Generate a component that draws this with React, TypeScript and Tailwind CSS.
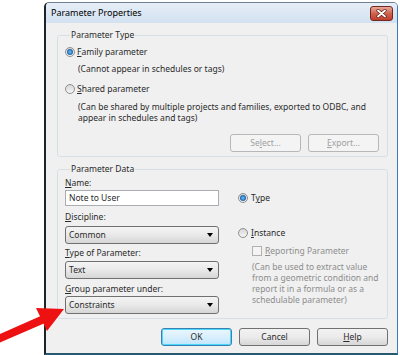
import React from "react"

function Radio({ checked }: { checked?: boolean }) {
  return (
    <span className="relative flex items-center justify-center w-[10px] h-[10px] rounded-full border border-[#8e8f8f] bg-linear-to-b from-[#d6d6d6] to-[#f6f6f6] shrink-0">
      {checked && (
        <span className="w-[6px] h-[6px] rounded-full bg-radial from-[#7fc4f0] via-[#2a7bc4] to-[#123e6e]" />
      )}
    </span>
  )
}

function U({ children }: { children: React.ReactNode }) {
  return <span className="underline underline-offset-[1px]">{children}</span>
}

function Dropdown({ value }: { value: string }) {
  return (
    <div className="h-[18px] flex items-center justify-between pl-[3px] pr-[5px] rounded-[3px] border border-[#707070] bg-linear-to-b from-[#f4f4f4] via-[#e9e9e9] to-[#d6d6d6]">
      <span>{value}</span>
      <svg width="6" height="4" viewBox="0 0 6 4">
        <path d="M0 0H6L3 4Z" fill="#000" />
      </svg>
    </div>
  )
}

function Button({
  children,
  disabled,
  primary,
}: {
  children: React.ReactNode
  disabled?: boolean
  primary?: boolean
}) {
  const base = "w-[71px] h-[18px] flex items-center justify-center rounded-[3px] border"
  if (disabled)
    return (
      <div className={`${base} border-[#b5b7b9] bg-[#f4f4f4] text-[#a0a0a0]`}>{children}</div>
    )
  if (primary)
    return (
      <div className={`${base} border-[#3c7fb1] bg-linear-to-b from-[#eaf6fd] via-[#d9effc] to-[#bee6fd] shadow-[inset_0_0_0_1px_#48d8fb]`}>
        {children}
      </div>
    )
  return (
    <div className={`${base} border-[#707070] bg-linear-to-b from-[#f2f2f2] via-[#ebebeb] to-[#d6d6d6]`}>{children}</div>
  )
}

export default function App() {
  return (
    <div className="relative w-[400px] h-[355px] bg-white overflow-hidden font-['Noto_Sans',sans-serif] text-[8.5px] leading-[12px] text-[#2a2a2a]">
      <div className="ml-[44px] mt-[2px] w-[354px] h-[353px] flex flex-col rounded-t-[5px] overflow-hidden border-t border-t-[#6f7f8f] border-l-2 border-l-[#1c2329] border-r border-r-[#3a7bbf] border-b-2 border-b-[#27586f]">
        {/* Title bar */}
        <div className="h-[20px] shrink-0 flex items-center justify-between pl-[5px] pr-[4px] bg-linear-to-b from-[#e6eef8] to-[#d3e1f0]">
          <span className="text-[9px] text-black">Parameter Properties</span>
          <div className="w-[23px] h-[15px] flex items-center justify-center rounded-[3px] border border-[#6e2a22] bg-linear-to-b from-[#e9a99a] via-[#d0624e] to-[#c23c2a]">
            <svg width="11" height="9" viewBox="0 0 11 9">
              <path d="M2 1.5L9 7.5M9 1.5L2 7.5" stroke="#5a2018" strokeWidth="3.2" strokeLinecap="round" />
              <path d="M2 1.5L9 7.5M9 1.5L2 7.5" stroke="#fff" strokeWidth="1.8" strokeLinecap="round" />
            </svg>
          </div>
        </div>

        {/* Body */}
        <div className="flex-1 bg-[#f0f0f0] pl-[11px] pr-[9px] pt-[6px] flex flex-col">
          {/* Parameter Type */}
          <fieldset className="border border-[#d5dfe5] rounded-[3px] pl-[7px] pr-[8px] pb-[4px]">
            <legend className="ml-[5px] px-[1px]">Parameter Type</legend>
            <div className="mt-[5px] flex items-center gap-[2px]">
              <Radio checked />
              <span>
                <U>F</U>amily parameter
              </span>
            </div>
            <div className="mt-[5px] pl-[13px]">(Cannot appear in schedules or tags)</div>
            <div className="mt-[8px] flex items-center gap-[2px]">
              <Radio />
              <span>
                <U>S</U>hared parameter
              </span>
            </div>
            <div className="mt-[6px] pl-[13px] leading-[11px]">
              (Can be shared by multiple projects and families, exported to ODBC, and
              <br />
              appear in schedules and tags)
            </div>
            <div className="mt-[11px] flex justify-end gap-[7px]">
              <Button disabled>
                <span>
                  Se<U>l</U>ect...
                </span>
              </Button>
              <Button disabled>
                <span>
                  <U>E</U>xport...
                </span>
              </Button>
            </div>
          </fieldset>

          {/* Parameter Data */}
          <fieldset className="mt-[6px] border border-[#d5dfe5] rounded-[3px] pl-[7px] pr-[8px] pb-[4px]">
            <legend className="ml-[5px] px-[1px]">Parameter Data</legend>
            <div className="flex">
              <div className="w-[154px] flex flex-col">
                <div className="mt-[2px]">
                  <U>N</U>ame:
                </div>
                <div className="mt-[1px] h-[16px] flex items-center pl-[3px] border border-[#abadb3] bg-white">
                  Note to User
                </div>
                <div className="mt-[5px]">
                  <U>D</U>iscipline:
                </div>
                <div className="mt-[3px]">
                  <Dropdown value="Common" />
                </div>
                <div className="mt-[3px]">
                  <U>T</U>ype of Parameter:
                </div>
                <div className="mt-[2px]">
                  <Dropdown value="Text" />
                </div>
                <div className="mt-[4px]">
                  <U>G</U>roup parameter under:
                </div>
                <div className="mt-[1px]">
                  <Dropdown value="Constraints" />
                </div>
              </div>

              <div className="ml-[19px] flex flex-col">
                <div className="mt-[17px] flex items-center gap-[3px]">
                  <Radio checked />
                  <span>
                    T<U>y</U>pe
                  </span>
                </div>
                <div className="mt-[23px] flex items-center gap-[3px]">
                  <Radio />
                  <span>
                    <U>I</U>nstance
                  </span>
                </div>
                <div className="mt-[6px] ml-[14px] flex items-center gap-[3px] text-[#8d8d8d]">
                  <span className="w-[10px] h-[10px] border border-[#b1b1b1] bg-[#f4f4f4] shrink-0" />
                  <span>
                    <U>R</U>eporting Parameter
                  </span>
                </div>
                <div className="mt-[4px] ml-[14px] leading-[11px] text-[#8d8d8d]">
                  (Can be used to extract value
                  <br />
                  from a geometric condition and
                  <br />
                  report it in a formula or as a
                  <br />
                  schedulable parameter)
                </div>
              </div>
            </div>
          </fieldset>

          {/* Buttons */}
          <div className="mt-[9px] flex justify-end gap-[7px]">
            <Button primary>OK</Button>
            <Button>Cancel</Button>
            <Button>
              <span>
                <U>H</U>elp
              </span>
            </Button>
          </div>
        </div>
      </div>

      {/* Red arrow annotation */}
      <svg className="absolute left-0 top-0 pointer-events-none" width="400" height="355" viewBox="0 0 400 355">
        <path d="M-4 340L44 319" stroke="#ee1111" strokeWidth="8" />
        <path d="M64 309L36 308L47 331Z" fill="#ee1111" />
      </svg>
    </div>
  )
}
